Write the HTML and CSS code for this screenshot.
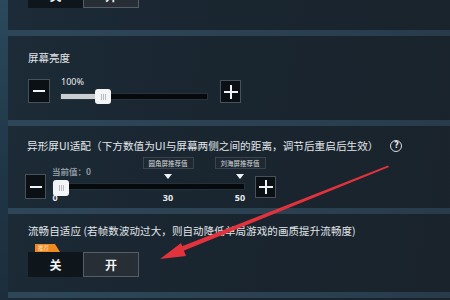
FILE: index.html
```html
<!DOCTYPE html>
<html lang="zh">
<head>
<meta charset="utf-8">
<link rel="stylesheet" href="styles.css">
</head>
<body>
<div class="screen">
  <div class="edge"></div>
  <div class="main">
    <section class="sec sec-top">
      <div class="toggle toggle-top">
        <div class="tg off">关</div><div class="tg on">开</div>
      </div>
    </section>
    <div class="band"></div>
    <section class="sec sec-bright">
      <div class="title">屏幕亮度</div>
      <div class="srow">
        <div class="btn minus"><span class="h"></span></div>
        <div class="slider">
          <div class="val">100%</div>
          <div class="track"><div class="fill" style="width:28%"></div><div class="thumb" style="left:34px"><i></i><i></i><i></i></div></div>
        </div>
        <div class="btn plus"><span class="h"></span><span class="v"></span></div>
      </div>
    </section>
    <div class="band"></div>
    <section class="sec sec-ui">
      <div class="title t2title"><span>异形屏UI适配（下方数值为UI与屏幕两侧之间的距离，调节后重启后生效）</span><span class="help">?</span></div>
      <div class="srow2">
        <div class="btn m2"><span class="h"></span></div>
        <div class="slider2">
          <div class="shead">
            <span class="cur">当前值：0</span>
            <div class="mark" style="left:116px"><span class="mlabel">圆角屏推荐值</span><span class="tri"></span></div>
            <div class="mark" style="left:188px"><span class="mlabel">刘海屏推荐值</span><span class="tri"></span></div>
          </div>
          <div class="track2"><div class="thumb th2"><i></i><i></i><i></i></div></div>
          <div class="nums">
            <span class="num" style="left:3px">0</span>
            <span class="num" style="left:116px">30</span>
            <span class="num" style="left:188px">50</span>
          </div>
        </div>
        <div class="btn p2"><span class="h"></span><span class="v"></span></div>
      </div>
    </section>
    <div class="band"></div>
    <section class="sec sec-smooth">
      <div class="title t3">流畅自适应 (若帧数波动过大，则自动降低单局游戏的画质提升流畅度)</div>
      <div class="badge">推荐</div>
      <div class="toggle">
        <div class="tg off">关</div><div class="tg on">开</div>
      </div>
    </section>
    <div class="band"></div>
  </div>
  <svg class="arrow" width="450" height="300" viewBox="0 0 450 300">
    <polygon points="388,165.5 389,167 178,253 175,249" fill="#e2333d"/>
    <polygon points="160,259 181,243 186,256" fill="#e2333d"/>
  </svg>
</div>
</body>
</html>
```
FILE: styles.css
```css
* { box-sizing: border-box; margin: 0; padding: 0; }
html, body { width: 450px; height: 300px; overflow: hidden; }
body {
  background: #18232d;
  font-family: "Noto Sans CJK SC", "Noto Sans", sans-serif;
  color: #e4e8eb;
}
.screen { display: flex; width: 450px; height: 300px; position: relative; overflow: hidden; }
.edge { width: 8px; flex: none; background: linear-gradient(#2a4a5c, #1f3546 60%, #1c2e3c); }
.main {
  width: 442px; flex: none; display: flex; flex-direction: column;
  background: linear-gradient(100deg, #1c2b37 0%, #19252f 50%, #1a232c 100%);
}
.band {
  flex: none; height: 6px;
  background: linear-gradient(90deg, #2d4759, #2c4253 50%, #273b4b);
}
.sec { padding-left: 20px; flex: none; width: 442px; }
.sec-top { height: 30px; }
.sec-bright { height: 84px; padding-top: 15px; }
.sec-ui { height: 82px; padding-top: 13px; padding-left: 17px; }
.sec-smooth { height: 78px; padding-top: 10px; }

.title { font-size: 10.5px; line-height: 14px; color: #e2e6ea; white-space: nowrap; }
.t2title { display: flex; align-items: center; font-size: 10.65px; padding-left: 2px; }
.t3 { font-size: 10.5px; letter-spacing: 0.1px; }
.help {
  margin-left: 12px; width: 12px; height: 12px; border: 1.2px solid #d8dde2; border-radius: 50%;
  font-size: 8px; line-height: 10px; text-align: center; font-family: "DejaVu Sans", sans-serif; font-weight: bold;
}

.toggle { display: flex; }
.toggle-top { margin-top: -17px; }
.tg {
  height: 25px; display: flex; align-items: center; justify-content: center;
  font-size: 12px; font-weight: bold; color: #f2f4f6;
}
.tg.off { width: 55px; background: #0e151b; }
.tg.on { width: 56px; background: #272e35; border: 1px solid #555d66; }

.srow { display: flex; align-items: flex-start; margin-top: 14px; }
.btn { position: relative; flex: none; background: #0b1015; border: 1px solid #46515b; }
.btn .h { position: absolute; left: 50%; top: 50%; width: 12px; height: 2px; margin: -1px 0 0 -6px; background: #f0f2f4; }
.btn .v { position: absolute; left: 50%; top: 50%; width: 2px; height: 14px; margin: -7px 0 0 -1px; background: #f0f2f4; }
.plus .h, .p2 .h { width: 14px; margin-left: -7px; }
.minus { width: 22px; height: 24px; }
.plus { width: 21px; height: 23px; margin-top: 1px; margin-left: 12px; }

.slider { width: 148px; flex: none; margin-left: 10px; height: 24px; display: flex; flex-direction: column; }
.val { font-size: 9px; line-height: 10px; margin-top: -2px; padding-left: 1px; font-family: "Noto Sans", sans-serif; color: #e8ebee; }
.track { position: relative; height: 7px; margin-top: 6px; background: #070a0d; border: 1px solid #26323c; }
.fill { height: 100%; background: #c9ced3; }
.thumb {
  position: absolute; top: -5px; width: 16px; height: 15px; background: #f4f5f6; border-radius: 3px;
  display: flex; justify-content: center; align-items: center; gap: 1px;
}
.thumb i { width: 1px; height: 6px; background: #b8bcc0; }

.srow2 { display: flex; align-items: flex-start; margin-top: 3px; }
.m2 { margin-top: 18px; width: 21px; height: 25px; }
.slider2 { width: 193px; flex: none; margin-left: 6px; display: flex; flex-direction: column; }
.shead { position: relative; height: 27px; padding-top: 10px; }
.cur { display: block; font-size: 8.5px; line-height: 10px; color: #8d98a2; font-weight: bold; }
.mark { position: absolute; top: 1px; width: 0; display: flex; flex-direction: column; align-items: center; }
.mlabel {
  white-space: nowrap; font-size: 6.5px; line-height: 8px; padding: 1px 5px; color: #d4dadf;
  background: #1e2831; border: 1px solid #39444e;
}
.tri { margin-top: 5px; width: 0; height: 0; border-left: 4px solid transparent; border-right: 4px solid transparent; border-top: 5px solid #f0f2f4; }
.track2 { position: relative; height: 7px; background: #070a0d; border: 1px solid #25313a; }
.th2 { left: 0; top: -4px; height: 16px; }
.nums { position: relative; height: 14px; }
.num {
  position: absolute; top: 2px; transform: translateX(-50%);
  font-size: 9px; line-height: 12px; font-weight: bold; color: #e8ebee; font-family: "Noto Sans", sans-serif;
}
.p2 { margin-top: 20px; margin-left: 10px; width: 21px; height: 22px; }

.badge {
  margin-top: 6px; margin-left: 7px; width: 25px; height: 8px;
  background: #ef8a22; color: #ffe3c2; font-size: 5.5px; line-height: 8px; padding-left: 3px;
  clip-path: polygon(0 0, 80% 0, 100% 100%, 0 100%);
}

.arrow { position: absolute; left: 0; top: 0; pointer-events: none; }
```
